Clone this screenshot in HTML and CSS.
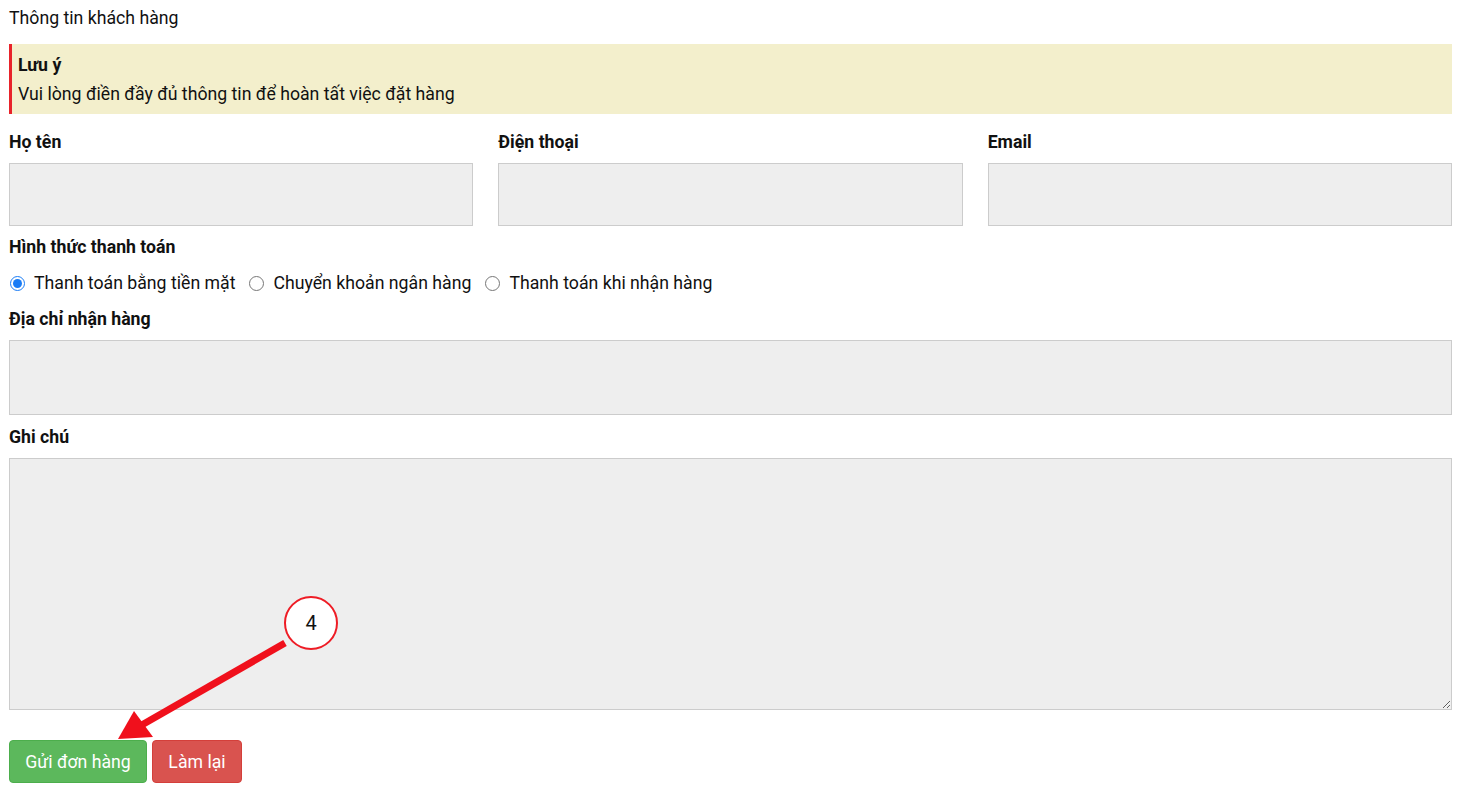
FILE: index.html
```html
<!DOCTYPE html>
<html lang="vi">
<head>
<meta charset="utf-8">
<title>Thông tin khách hàng</title>
<link rel="stylesheet" href="styles.css">
</head>
<body>
<div class="page">
  <div class="title">Thông tin khách hàng</div>
  <div class="note">
    <div class="note-title">Lưu ý</div>
    <div>Vui lòng điền đầy đủ thông tin để hoàn tất việc đặt hàng</div>
  </div>
  <div class="row3">
    <div class="field">
      <label class="label">Họ tên</label>
      <input class="input" type="text">
    </div>
    <div class="field">
      <label class="label">Điện thoại</label>
      <input class="input" type="text">
    </div>
    <div class="field">
      <label class="label">Email</label>
      <input class="input" type="text">
    </div>
  </div>
  <div class="label label-pay">Hình thức thanh toán</div>
  <div class="radios">
    <label class="radio"><input type="radio" name="pay" checked> Thanh toán bằng tiền mặt</label>
    <label class="radio"><input type="radio" name="pay"> Chuyển khoản ngân hàng</label>
    <label class="radio"><input type="radio" name="pay"> Thanh toán khi nhận hàng</label>
  </div>
  <label class="label label-addr">Địa chỉ nhận hàng</label>
  <input class="input input-addr" type="text">
  <label class="label label-note">Ghi chú</label>
  <textarea class="textarea"></textarea>
  <div class="buttons">
    <button class="btn btn-green">Gửi đơn hàng</button>
    <button class="btn btn-red">Làm lại</button>
  </div>
  <svg class="annot" width="400" height="200" viewBox="0 0 400 200">
    <line x1="285" y1="53" x2="140" y2="136" stroke="#f0101c" stroke-width="7"/>
    <polygon points="118,149 134,121 153,147" fill="#f0101c"/>
  </svg>
  <div class="badge">4</div>
</div>
</body>
</html>
```
FILE: styles.css
```css
* { box-sizing: border-box; }
html, body { margin: 0; padding: 0; background: #fff; }
body {
  font-family: Roboto, "Noto Sans", "Liberation Sans", sans-serif;
  font-size: 17.7px;
  color: #111;
}
.page {
  position: relative;
  width: 1443px;
  margin-left: 9px;
  display: flex;
  flex-direction: column;
}
.title {
  line-height: 22px;
  padding-top: 7px;
}
.note {
  margin-top: 15px;
  background: #f3efcc;
  border-left: 3px solid #e8232a;
  padding: 7px 6px 5px 6px;
  line-height: 29px;
}
.note-title { font-weight: bold; }
.row3 {
  display: grid;
  grid-template-columns: repeat(3, 1fr);
  column-gap: 25px;
  margin-top: 17px;
}
.field { display: flex; flex-direction: column; }
.label {
  display: block;
  font-weight: bold;
  line-height: 22px;
  margin-bottom: 10px;
}
.input, .textarea {
  display: block;
  width: 100%;
  background: #eee;
  border: 1px solid #ccc;
  border-radius: 0;
  font-family: inherit;
  font-size: 16px;
  outline: none;
}
.input { height: 63px; }
.label-pay { margin-top: 10px; margin-bottom: 14px; }
.radios {
  display: flex;
  align-items: center;
  line-height: 22px;
  margin-bottom: 14px;
}
.radio {
  display: flex;
  align-items: center;
  margin-right: 13px;
}
.radio input {
  margin: 0 9px 0 1px;
  width: 15px;
  height: 15px;
  accent-color: #1a7cf5;
}
.input-addr { height: 75px; }
.label-addr { margin-bottom: 10px; }
.label-note { margin-top: 11px; }
.textarea { height: 252px; resize: vertical; }
.buttons {
  display: flex;
  gap: 5px;
  margin-top: 30px;
}
.btn {
  height: 43px;
  border: 1px solid transparent;
  border-radius: 4px;
  color: #fff;
  font-family: inherit;
  font-size: 17.7px;
  padding: 0 10px;
}
.btn-green { background: #5cb85c; border-color: #4cae4c; width: 138px; }
.btn-red { background: #d9534f; border-color: #d43f3a; width: 90px; }
.annot {
  position: absolute;
  left: -9px;
  top: 590px;
  pointer-events: none;
}
.badge {
  position: absolute;
  left: 275px;
  top: 596px;
  width: 54px;
  height: 54px;
  border-radius: 50%;
  border: 2px solid #ee1c25;
  background: #fff;
  display: flex;
  align-items: center;
  justify-content: center;
  font-size: 20px;
  color: #111;
}
```
